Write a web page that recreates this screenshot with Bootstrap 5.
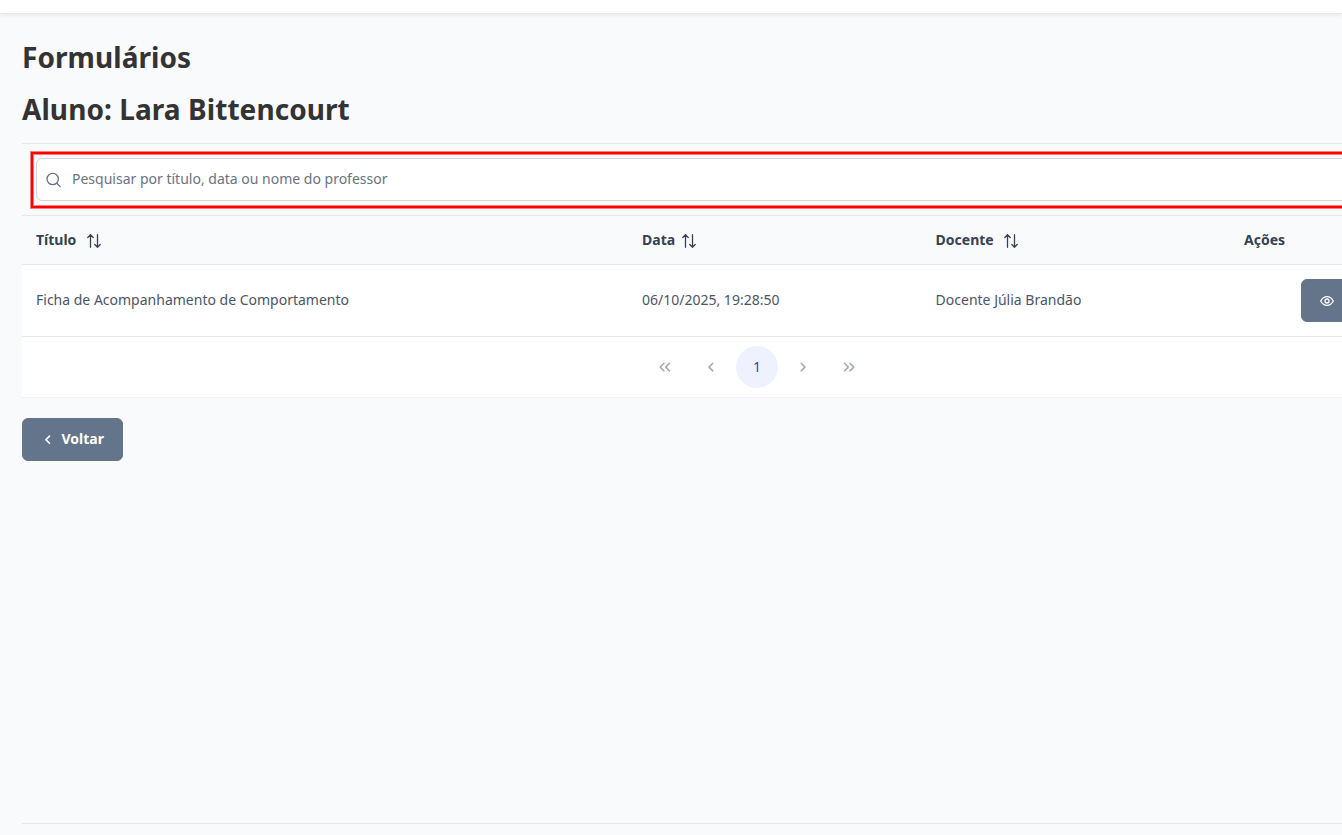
<!DOCTYPE html>
<html lang="pt-BR">
<head>
<meta charset="utf-8">
<meta name="viewport" content="width=device-width, initial-scale=1">
<title>Formulários</title>
<link href="https://cdn.jsdelivr.net/npm/bootstrap@5.3.0/dist/css/bootstrap.min.css" rel="stylesheet">
<style>
  body { font-family: "Noto Sans", sans-serif; font-size: 14px; line-height: 21px; color: #4b5563; background: #f8fafc; height: 100vh; }
  .topbar { height: 14px; border-bottom: 1px solid #e5e7eb; box-shadow: 0 1px 5px rgba(0,0,0,.08); }
  .page { width: 1470px; margin: 22px 0 0 22px; }
  .page h1 { font-size: 28px; line-height: 42px; font-weight: 700; letter-spacing: .07px; color: #333; margin: 0 0 10px; }
  .grid-box { border-top: 1px solid #e5e7eb; margin-top: 13px; }
  .search-row { height: 72px; padding: 8px 9px 0 9px; border-bottom: 1px solid #e5e7eb; }
  .search-mark { height: 56px; border: 2px solid #f00; padding: 4px 3px; box-shadow: 0 0 0 1px rgba(255,0,0,.5), inset 0 0 0 1px rgba(255,0,0,.5); }
  .search-box { height: 43px; background: #fff; border: 1px solid #d1d5db; border-radius: 6px; padding: 0 9px; gap: 10px; }
  .search-box svg { color: #6b7280; margin-top: 1px; }
  .search-box input { border: 0; outline: 0; padding: 0; font-size: 14px; line-height: 19px; color: #4b5563; height: 19px; margin-bottom: 2px; }
  .search-box input::placeholder { color: #6b7280; opacity: 1; }
  .forms { table-layout: fixed; width: 1470px; margin: 0; border-collapse: separate; border-spacing: 0; }
  .forms th, .forms td { padding: 14px; border-bottom: 1px solid #e5e7eb; vertical-align: middle; }
  .forms th { padding: 13px 14px 14px; height: 49px; font-weight: 700; color: #374151; background: #f9fafb; white-space: nowrap; }
  .forms th svg { margin: 3px 0 0 10px; }
  .forms th svg.near { margin-left: 7px; }
  .forms th:first-child svg { margin-left: 10.8px; }
  .forms td { height: 72px; background: #fff; }
  .forms td:not(:last-child) { padding-bottom: 16px; }
  .slate { height: 43px; border-radius: 6px; border: 1px solid #64748b; background: #64748b; color: #fff; font-size: 14px; line-height: 21px; font-weight: 700; padding: 0 18px 2px 17.5px; gap: 7px; }
  .slate svg { margin-top: 2px; }
  .view { margin-left: 57px; padding-left: 18px; }
  .pager { height: 61px; background: #fff; border-bottom: 1px solid #f0f1f4; gap: 4px; color: #a5a9b2; }
  .pager span { width: 42px; height: 42px; border-radius: 50%; }
  .pager .current { background: #eef2ff; color: #4338ca; padding-bottom: 2px; }
  .back { margin-top: 20px; }
  .foot-line { margin: 0 0 11px 22px; border-top: 1px solid #e5e7eb; height: 1px; }
  svg { fill: none; stroke: currentColor; flex: none; stroke-linecap: round; stroke-linejoin: round; }
</style>
</head>
<body class="d-flex flex-column overflow-hidden">
<svg class="d-none">
  <symbol id="sort" viewBox="0 0 14 14"><path d="M3.5 13.3V.7M.8 3.500 3.500.7l2.700 2.800M10.500.7v12.600M7.800 10.500l2.700 2.800 2.700-2.800"/></symbol>
</svg>
<header class="topbar bg-white flex-shrink-0"></header>
<main class="page flex-grow-1">
  <h1>Formulários</h1>
  <h1>Aluno: Lara Bittencourt</h1>
  <section class="grid-box">
    <div class="search-row">
      <div class="search-mark">
        <label class="search-box d-flex align-items-center">
          <svg width="16" height="16" viewBox="0 0 16 16" stroke-width="1.3"><circle cx="6.700" cy="7" r="5.700"/><path d="m10.800 11.200 3.400 3.400"/></svg>
          <input class="flex-grow-1 bg-transparent" type="text" placeholder="Pesquisar por título, data ou nome do professor">
        </label>
      </div>
    </div>
    <table class="forms">
      <colgroup><col style="width:606px"><col style="width:293.6px"><col style="width:308.4px"><col></colgroup>
      <thead>
        <tr>
          <th><span class="d-flex align-items-center">Título<svg width="14" height="14" stroke-width="1.3"><use href="#sort"/></svg></span></th>
          <th><span class="d-flex align-items-center">Data<svg class="near" width="14" height="14" stroke-width="1.3"><use href="#sort"/></svg></span></th>
          <th><span class="d-flex align-items-center">Docente<svg width="14" height="14" stroke-width="1.3"><use href="#sort"/></svg></span></th>
          <th>Ações</th>
        </tr>
      </thead>
      <tbody>
        <tr>
          <td>Ficha de Acompanhamento de Comportamento</td>
          <td>06/10/2025, 19:28:50</td>
          <td>Docente Júlia Brandão</td>
          <td><button class="slate btn view d-flex align-items-center" type="button" aria-label="Exibir">
            <svg width="14" height="14" viewBox="0 0 14 14" stroke-width="1.300"><path d="M.7 7C2.200 4.100 4.400 2.600 7 2.600s4.800 1.500 6.300 4.400C11.800 9.900 9.600 11.400 7 11.400S2.200 9.900.7 7Z"/><circle cx="7" cy="7" r="2"/></svg></button></td>
        </tr>
      </tbody>
    </table>
    <nav class="pager d-flex align-items-center justify-content-center">
      <span class="d-flex align-items-center justify-content-center"><svg width="14" height="14" viewBox="0 0 14 14" stroke-width="1.500"><path d="M6 3.300 2.200 7.100 6 10.900M11.500 3.300 7.700 7.100l3.800 3.800"/></svg></span>
      <span class="d-flex align-items-center justify-content-center"><svg width="14" height="14" viewBox="0 0 14 14" stroke-width="1.500"><path d="M8.800 3.300 5 7.100l3.800 3.800"/></svg></span>
      <span class="current d-flex align-items-center justify-content-center">1</span>
      <span class="d-flex align-items-center justify-content-center"><svg width="14" height="14" viewBox="0 0 14 14" stroke-width="1.500"><path d="M5.200 3.300 9 7.100l-3.800 3.800"/></svg></span>
      <span class="d-flex align-items-center justify-content-center"><svg width="14" height="14" viewBox="0 0 14 14" stroke-width="1.500"><path d="m2.500 3.300 3.800 3.800-3.800 3.800M8 3.300l3.800 3.800L8 10.900"/></svg></span>
    </nav>
  </section>
  <button class="slate btn back d-flex align-items-center" type="button"><svg width="14" height="14" viewBox="0 0 14 14" stroke-width="1.600"><path d="M8.500 3.100 4.900 6.700l3.600 3.600"/></svg>Voltar</button>
</main>
<footer class="foot-line flex-shrink-0"></footer>
</body>
</html>
